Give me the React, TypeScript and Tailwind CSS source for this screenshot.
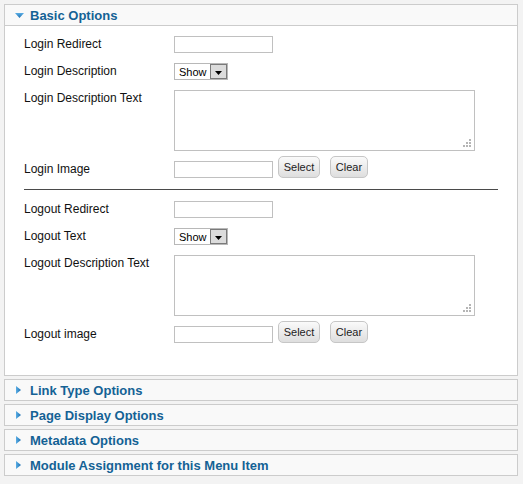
import React from "react";

const font = "font-['Liberation_Sans',Arial,sans-serif]";

function DownArrow() {
  return (
    <svg width="9" height="5" viewBox="0 0 9 5" className="block">
      <defs>
        <linearGradient id="gd" x1="0" y1="0" x2="0" y2="1">
          <stop offset="0" stopColor="#5aaee6" />
          <stop offset="1" stopColor="#1d6fb0" />
        </linearGradient>
      </defs>
      <polygon points="0,0 9,0 4.5,5" fill="url(#gd)" />
    </svg>
  );
}

function RightArrow() {
  return (
    <svg width="5" height="8" viewBox="0 0 5 8" className="block">
      <defs>
        <linearGradient id="gr" x1="0" y1="0" x2="1" y2="0">
          <stop offset="0" stopColor="#5aaee6" />
          <stop offset="1" stopColor="#1d6fb0" />
        </linearGradient>
      </defs>
      <polygon points="0,0 5,4 0,8" fill="url(#gr)" />
    </svg>
  );
}

function Label({ children }: { children: React.ReactNode }) {
  return (
    <div className="w-[150px] shrink-0 text-[12px] leading-[17px] text-[#111]">
      {children}
    </div>
  );
}

function TextInput() {
  return <div className="w-[99px] h-[17px] border border-[#c0c0c0] bg-white" />;
}

function SelectBox() {
  return (
    <div className="w-[54px] h-[17px] border border-[#b8b8b8] bg-white flex items-stretch">
      <div className="flex-1 pl-[4px] pt-[1px] text-[11px] leading-[15px] text-black">Show</div>
      <div className="w-[17px] border border-[#7a7a7a] bg-[#dcdcdc] flex items-end justify-center pb-[3px]">
        <svg width="7" height="4" viewBox="0 0 7 4" className="block">
          <polygon points="0,0 7,0 3.5,4" fill="#000" />
        </svg>
      </div>
    </div>
  );
}

function TextArea() {
  return (
    <div className="relative w-[301px] h-[61px] border border-[#c0c0c0] bg-white">
      <svg width="10" height="10" viewBox="0 0 10 10" className="absolute right-[2px] bottom-[2px]">
        <rect x="7" y="1" width="2" height="2" fill="#b5b5b5" />
        <rect x="4" y="4" width="2" height="2" fill="#b5b5b5" />
        <rect x="7" y="4" width="2" height="2" fill="#b5b5b5" />
        <rect x="1" y="7" width="2" height="2" fill="#b5b5b5" />
        <rect x="4" y="7" width="2" height="2" fill="#b5b5b5" />
        <rect x="7" y="7" width="2" height="2" fill="#b5b5b5" />
      </svg>
    </div>
  );
}

function Btn({ children, w }: { children: React.ReactNode; w: string }) {
  return (
    <div
      className={`${w} h-[22px] rounded-[5px] border border-[#c6c6c6] bg-gradient-to-b from-[#fafafa] to-[#dedede] text-[11px] leading-[20px] text-[#222] text-center`}
    >
      {children}
    </div>
  );
}

function ImageRow({ label }: { label: string }) {
  return (
    <div className="flex items-start">
      <div className="mt-[5px]">
        <Label>{label}</Label>
      </div>
      <div className="flex items-end">
        <TextInput />
        <div className="ml-[5px]">
          <Btn w="w-[42px]">Select</Btn>
        </div>
        <div className="ml-[10px]">
          <Btn w="w-[38px]">Clear</Btn>
        </div>
      </div>
    </div>
  );
}

function Collapsed({ title }: { title: string }) {
  return (
    <div className="mt-[3px] border border-[#cccccc] bg-[#f9f9f9] h-[22px] flex items-center">
      <div className="ml-[11px] w-[14px]">
        <RightArrow />
      </div>
      <div className="pt-[2px] text-[13px] font-bold leading-[20px] text-[#146295]">{title}</div>
    </div>
  );
}

export default function App() {
  return (
    <div className={`${font} w-[523px] h-[484px] bg-[#f3f3f3] pt-[4px] pl-[4px] pr-[5px]`}>
      <div className="border border-[#cccccc] bg-white">
        <div className="h-[21px] bg-[#f9f9f9] border-b border-[#cccccc] flex items-center">
          <div className="ml-[10px] w-[15px]">
            <DownArrow />
          </div>
          <div className="pt-[2px] text-[13px] font-bold leading-[20px] text-[#146295]">Basic Options</div>
        </div>
        <div className="pt-[10px] pb-[32px] px-[19px] flex flex-col">
          <div className="flex items-start">
            <Label>Login Redirect</Label>
            <TextInput />
          </div>
          <div className="flex items-start mt-[10px]">
            <Label>Login Description</Label>
            <SelectBox />
          </div>
          <div className="flex items-start mt-[10px]">
            <Label>Login Description Text</Label>
            <TextArea />
          </div>
          <div className="mt-[5px]">
            <ImageRow label="Login Image" />
          </div>
          <div className="mt-[11px] h-[1px] bg-[#4a4a4a]" />
          <div className="flex items-start mt-[11px]">
            <Label>Logout Redirect</Label>
            <TextInput />
          </div>
          <div className="flex items-start mt-[10px]">
            <Label>Logout Text</Label>
            <SelectBox />
          </div>
          <div className="flex items-start mt-[10px]">
            <Label>Logout Description Text</Label>
            <TextArea />
          </div>
          <div className="mt-[5px]">
            <ImageRow label="Logout image" />
          </div>
        </div>
      </div>
      <Collapsed title="Link Type Options" />
      <Collapsed title="Page Display Options" />
      <Collapsed title="Metadata Options" />
      <Collapsed title="Module Assignment for this Menu Item" />
    </div>
  );
}
